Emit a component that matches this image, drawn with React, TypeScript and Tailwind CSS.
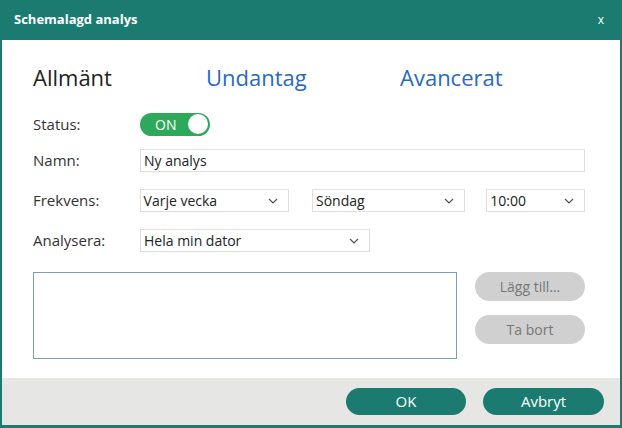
import React from "react";

const Chev = () => (
  <svg width="10" height="6" viewBox="0 0 10 6" className="shrink-0"><path d="M1 1l4 4 4-4" fill="none" stroke="#555" strokeWidth="1.2" /></svg>
);

function Sel({ text, w }: { text: string; w: string }) {
  return (
    <div className={`h-[23px] ${w} border border-[#e2dede] bg-white flex items-center justify-between pl-[3px] pr-[10px] text-[14px] text-[#222]`}>
      <span>{text}</span>
      <Chev />
    </div>
  );
}

export default function App() {
  return (
    <div className="w-[622px] h-[428px] bg-[#1b7b70] flex flex-col" style={{ fontFamily: "'Open Sans', 'Noto Sans', sans-serif" }}>
      <div className="h-[40px] flex items-center justify-between px-[14px] text-white shrink-0">
        <span className="text-[13px] font-bold">Schemalagd analys</span>
        <span className="text-[12px] mr-[4px]">x</span>
      </div>
      <div className="flex-1 mx-[2px] mb-[3px] bg-white flex flex-col">
        <div className="flex-1 pl-[31px] pr-[35px]">
          <div className="flex items-center h-[72px] text-[22px] pt-[2px]">
            <span className="text-[#222] w-[173px]">Allmänt</span>
            <span className="text-[#2a68c5] w-[194px]">Undantag</span>
            <span className="text-[#2a68c5]">Avancerat</span>
          </div>
          <div className="flex items-center h-[24px] text-[15px] text-[#333]">
            <span className="w-[107px]">Status:</span>
            <div className="w-[70px] h-[23px] rounded-full bg-[#2ea85a] flex items-center justify-between pl-[15px] pr-[2px]">
              <span className="text-white text-[14px]">ON</span>
              <div className="w-[20px] h-[20px] rounded-full bg-white" />
            </div>
          </div>
          <div className="flex items-center h-[23px] mt-[13px] text-[15px] text-[#333]">
            <span className="w-[107px]">Namn:</span>
            <div className="flex-1 h-[23px] border border-[#e2dede] flex items-center pl-[3px] text-[14px] text-[#222]">Ny analys</div>
          </div>
          <div className="flex items-center mt-[17px] text-[15px] text-[#333]">
            <span className="w-[107px]">Frekvens:</span>
            <Sel text="Varje vecka" w="w-[150px]" />
            <div className="w-[23px]" />
            <Sel text="Söndag" w="w-[154px]" />
            <div className="w-[21px]" />
            <Sel text="10:00" w="w-[99px]" />
          </div>
          <div className="flex items-center mt-[17px] text-[15px] text-[#333]">
            <span className="w-[107px]">Analysera:</span>
            <Sel text="Hela min dator" w="w-[230px]" />
          </div>
          <div className="flex mt-[20px]">
            <div className="w-[425px] h-[87px] border border-[#7a9cc0]" />
            <div className="ml-[18px] flex flex-col gap-[14px]">
              <div className="w-[110px] h-[29px] rounded-full bg-[#d0d0d0] flex items-center justify-center text-[14px] text-[#777]">Lägg till...</div>
              <div className="w-[110px] h-[29px] rounded-full bg-[#d0d0d0] flex items-center justify-center text-[14px] text-[#777]">Ta bort</div>
            </div>
          </div>
        </div>
        <div className="h-[47px] bg-[#e6e6e4] flex items-center justify-end gap-[17px] pr-[16px] shrink-0">
          <div className="w-[120px] h-[27px] rounded-full bg-[#1b7b70] flex items-center justify-center text-white text-[15px]">OK</div>
          <div className="w-[121px] h-[27px] rounded-full bg-[#1b7b70] flex items-center justify-center text-white text-[15px]">Avbryt</div>
        </div>
      </div>
    </div>
  );
}
